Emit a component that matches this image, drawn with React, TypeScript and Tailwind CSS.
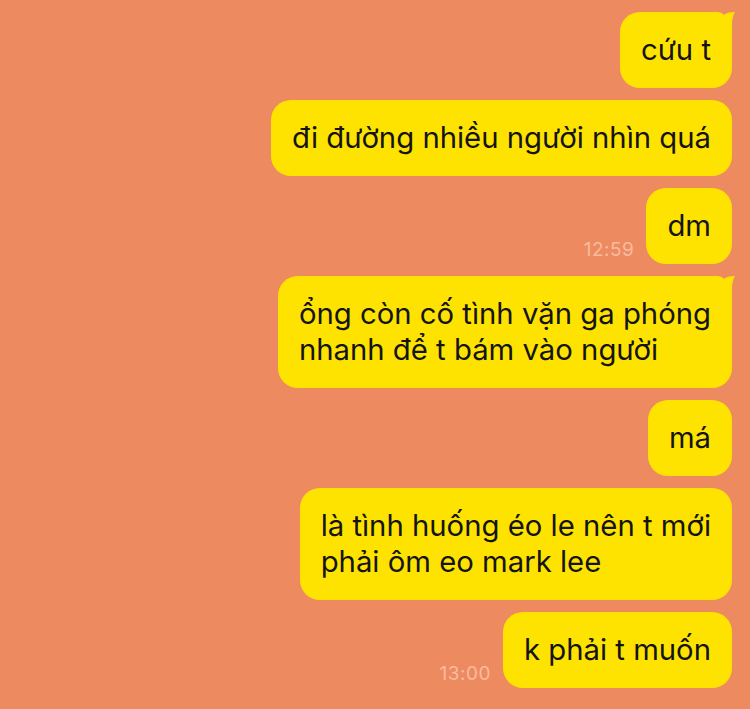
type Msg = {
  lines: string[];
  tail?: boolean;
  time?: string;
};

const messages: Msg[] = [
  { lines: ["cứu t"], tail: true },
  { lines: ["đi đường nhiều người nhìn quá"] },
  { lines: ["dm"], time: "12:59" },
  { lines: ["ổng còn cố tình vặn ga phóng", "nhanh để t bám vào người"], tail: true },
  { lines: ["má"] },
  { lines: ["là tình huống éo le nên t mới", "phải ôm eo mark lee"] },
  { lines: ["k phải t muốn"], time: "13:00" },
];

const Tail = () => (
  <svg
    className="absolute top-0 right-[-3px] h-[22px] w-[24px]"
    viewBox="0 0 24 22"
    fill="#FFE300"
  >
    <path d="M0 0 L6 0 Q11 0 13 3 Q16 0 24 0 Q21 5 21 12 L21 22 L0 22 Z" />
  </svg>
);

const Bubble = ({ msg }: { msg: Msg }) => (
  <div className="flex items-end gap-3">
    {msg.time && (
      <span className="mb-[5px] text-[19px] leading-none tracking-[0.5px] text-[#F7BC9F]">
        {msg.time}
      </span>
    )}
    <div className="relative rounded-[20px] bg-[#FFE300] px-[21px] py-[20px] text-[29.3px] leading-[36px] text-[#141414]">
      {msg.tail && <Tail />}
      <div className="relative">
        {msg.lines.map((l, i) => (
          <div key={i} className="whitespace-nowrap">
            {l}
          </div>
        ))}
      </div>
    </div>
  </div>
);

export default function App() {
  return (
    <div
      className="flex h-[709px] w-[750px] flex-col items-end gap-3 overflow-hidden bg-[#EE8A5F] pt-3 pr-[18px]"
      style={{ fontFamily: '"Inter", "Liberation Sans", sans-serif' }}
    >
      {messages.map((m, i) => (
        <Bubble key={i} msg={m} />
      ))}
    </div>
  );
}
